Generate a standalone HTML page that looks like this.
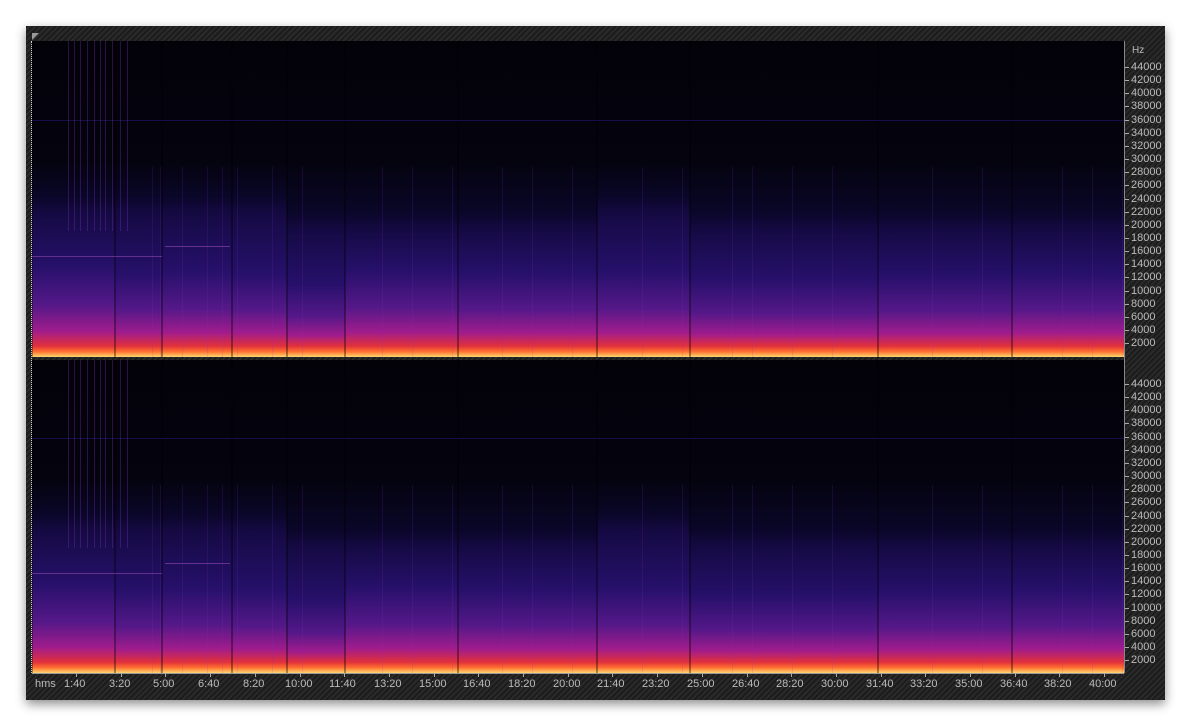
<!DOCTYPE html>
<html><head><meta charset="utf-8"><style>
html,body{margin:0;width:1191px;height:726px;overflow:hidden}
body{background:#fff;position:relative;font-family:"Liberation Sans",sans-serif}
#win{position:absolute;left:26px;top:26px;width:1139px;height:674px;background:repeating-linear-gradient(135deg,#1c1c1c 0 2px,#2a2a2a 2px 4px);box-shadow:0 4px 10px rgba(0,0,0,.45)}
.ch{position:absolute;left:32px;width:1092px;background:#03020a;overflow:hidden}
.seg{position:absolute;bottom:0}
.lab{position:absolute;color:#bbb;font-size:11px;line-height:11px}
.tick{position:absolute;width:4px;height:1px;background:#aaa}
</style></head><body>
<div id="win"></div>
<div style="position:absolute;left:32px;top:33px;width:0;height:0;border-top:7px solid #999;border-right:7px solid transparent"></div>
<div style="position:absolute;left:31px;top:41px;width:1px;height:632px;border-left:1px dotted #ccc"></div>
<div id="c1" class="ch" style="top:41px;height:316px"></div>
<div id="c2" class="ch" style="top:360px;height:313px"></div>
<div style="position:absolute;left:1124px;top:41px;width:1px;height:632px;background:#888"></div>
<div style="position:absolute;left:32px;top:673px;width:1092px;height:1px;background:#999"></div>
<div class="lab" style="left:1132px;top:45px;font-size:10px">Hz</div>
<div id="ax"></div>
<script>
var segs=[[32,115,1.1],[115,162,0.8],[162,232,0.9],[232,287,0.8],[287,345,0.4],[345,458,0.95],[458,597,0.85],[597,690,0.9],[690,878,0.6],[878,1012,0.75],[1012,1124,0.85]];
function fill(id){var c=document.getElementById(id),h='';
segs.forEach(function(s,i){var k=s[2];var top=(i==7?55:(i<4?55:60));
h+='<div class="seg" style="left:'+(s[0]-32)+'px;width:'+(s[1]-s[0])+'px;height:100%;background:linear-gradient(to bottom,#030209 0%,#04030e 38%,#0a0628 '+(top-6)+'%,#150a44 '+top+'%,#26106a '+(72+(1-k)*8)+'%,#541888 '+(84+(1-k)*5)+'%,#a01c8c '+(92+(1-k)*2)+'%,#e0303c 96.5%,#ff7030 98.3%,#ffd870 100%)"></div>';
h+='<div style="position:absolute;left:'+(s[0]-33)+'px;top:0;width:2px;height:100%;background:rgba(0,0,0,.35)"></div>';});
h+='<div style="position:absolute;left:0;top:25%;width:100%;height:1px;background:#160e48"></div>';
h+='<div style="position:absolute;left:0;top:68%;width:130px;height:1px;background:rgba(140,70,170,.6)"></div>';
h+='<div style="position:absolute;left:133px;top:65%;width:65px;height:1px;background:rgba(150,70,180,.6)"></div>';
var xs=[36,42,48,55,62,68,73,80,88,95,120,128,150,175,190,205,240,270,350,380,420,470,500,540,610,650,700,720,760,800,900,950,1030,1060,1090];
xs.forEach(function(x,j){h+='<div style="position:absolute;left:'+x+'px;top:'+(j<10?0:40)+'%;width:1px;height:60%;background:rgba(140,50,200,'+(j<10?0.3:0.15)+')"></div>';});
c.innerHTML=h;}
fill('c1');fill('c2');
var a='';
[[67,0],[384,0]].forEach(function(b){for(var i=0;i<22;i++){var v=44000-i*2000,y=b[0]+i*13.15;
a+='<div class="tick" style="left:1125px;top:'+Math.round(y)+'px"></div><div class="lab" style="left:1131px;top:'+Math.round(y-5)+'px">'+v+'</div>';}});
var t=['1:40','3:20','5:00','6:40','8:20','10:00','11:40','13:20','15:00','16:40','18:20','20:00','21:40','23:20','25:00','26:40','28:20','30:00','31:40','33:20','35:00','36:40','38:20','40:00'];
a+='<div class="lab" style="left:35px;top:679px">hms</div>';
t.forEach(function(s,i){var x=76+i*44.7;a+='<div class="lab" style="left:'+Math.round(x-s.length*3)+'px;top:679px">'+s+'</div><div style="position:absolute;left:'+Math.round(x)+'px;top:673px;width:1px;height:4px;background:#aaa"></div>';});
document.getElementById('ax').innerHTML=a;
</script>
</body></html>
